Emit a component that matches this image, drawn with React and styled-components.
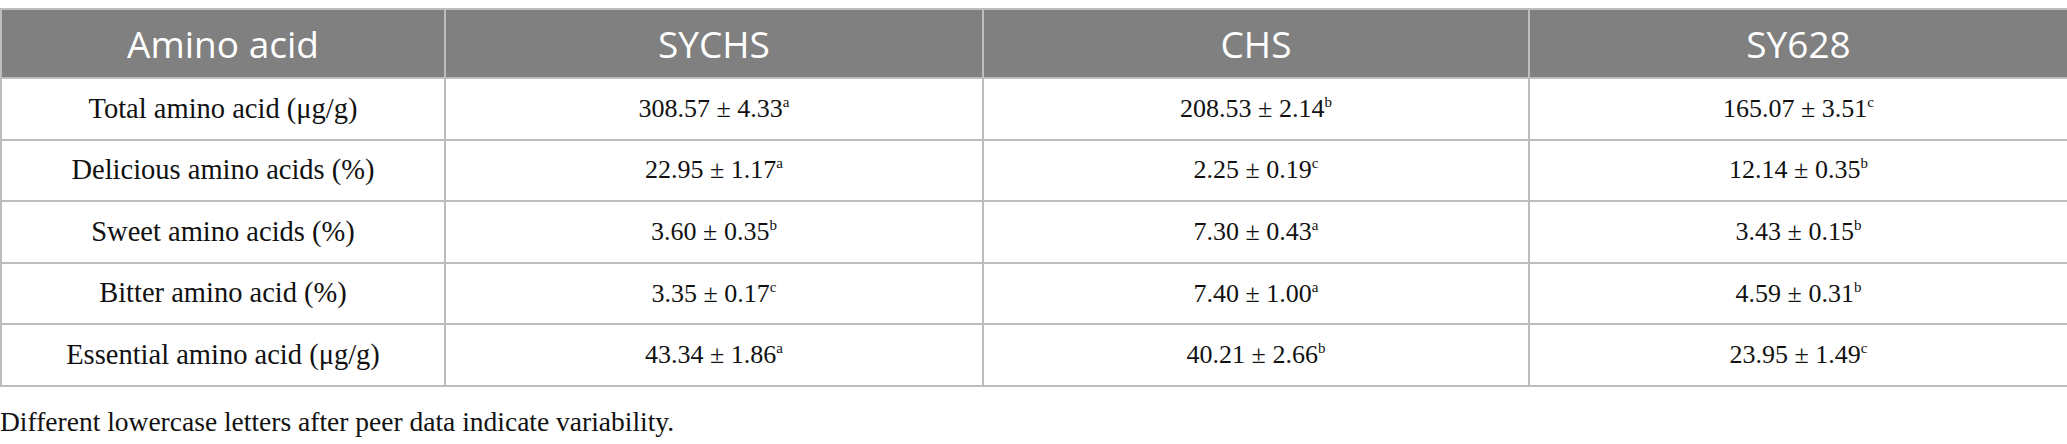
import React from "react";
import styled, { createGlobalStyle } from "styled-components";

const GlobalStyle = createGlobalStyle`
  html, body {
    margin: 0;
    padding: 0;
    background: #ffffff;
  }
`;

const Wrapper = styled.div`
  width: 2067px;
  padding-top: 8px;
`;

const Table = styled.table`
  width: 2067px;
  border-collapse: collapse;
  table-layout: fixed;
`;

const HeadCell = styled.th`
  height: 67px;
  padding: 0;
  background-color: #808080;
  color: #ffffff;
  font-family: "Open Sans", "Noto Sans", sans-serif;
  font-weight: 400;
  font-size: 37px;
  line-height: 1;
  text-align: center;
  vertical-align: middle;
  border: 2px solid #bdbdbd;
`;

const Cell = styled.td`
  height: 59.6px;
  padding: 0;
  color: #111111;
  font-family: "Liberation Serif", "Times New Roman", serif;
  font-size: ${(p) => (p.$label ? "28.5px" : "26px")};
  line-height: 1;
  text-align: center;
  vertical-align: middle;
  border: 2px solid #bdbdbd;
`;

const Sup = styled.sup`
  font-size: 15px;
  vertical-align: 10px;
  line-height: 0;
`;

const Note = styled.p`
  margin: 19px 0 0 0;
  font-family: "Liberation Serif", "Times New Roman", serif;
  font-size: 27.5px;
  color: #111111;
`;

const columns = [
  { label: "Amino acid", width: 444 },
  { label: "SYCHS", width: 538 },
  { label: "CHS", width: 546 },
  { label: "SY628", width: 539 },
];

const rows = [
  ["Total amino acid (μg/g)", ["308.57 ± 4.33", "a"], ["208.53 ± 2.14", "b"], ["165.07 ± 3.51", "c"]],
  ["Delicious amino acids (%)", ["22.95 ± 1.17", "a"], ["2.25 ± 0.19", "c"], ["12.14 ± 0.35", "b"]],
  ["Sweet amino acids (%)", ["3.60 ± 0.35", "b"], ["7.30 ± 0.43", "a"], ["3.43 ± 0.15", "b"]],
  ["Bitter amino acid (%)", ["3.35 ± 0.17", "c"], ["7.40 ± 1.00", "a"], ["4.59 ± 0.31", "b"]],
  ["Essential amino acid (μg/g)", ["43.34 ± 1.86", "a"], ["40.21 ± 2.66", "b"], ["23.95 ± 1.49", "c"]],
];

const App = () => {
  return (
    <Wrapper>
      <GlobalStyle />
      <Table>
        <colgroup>
          {columns.map((c) => (
            <col key={c.label} style={{ width: c.width }} />
          ))}
        </colgroup>
        <thead>
          <tr>
            {columns.map((c) => (
              <HeadCell key={c.label}>{c.label}</HeadCell>
            ))}
          </tr>
        </thead>
        <tbody>
          {rows.map(([name, ...values]) => (
            <tr key={name}>
              <Cell $label>{name}</Cell>
              {values.map(([value, letter], i) => (
                <Cell key={i}>
                  {value}
                  <Sup>{letter}</Sup>
                </Cell>
              ))}
            </tr>
          ))}
        </tbody>
      </Table>
      <Note>Different lowercase letters after peer data indicate variability.</Note>
    </Wrapper>
  );
};

export default App;
